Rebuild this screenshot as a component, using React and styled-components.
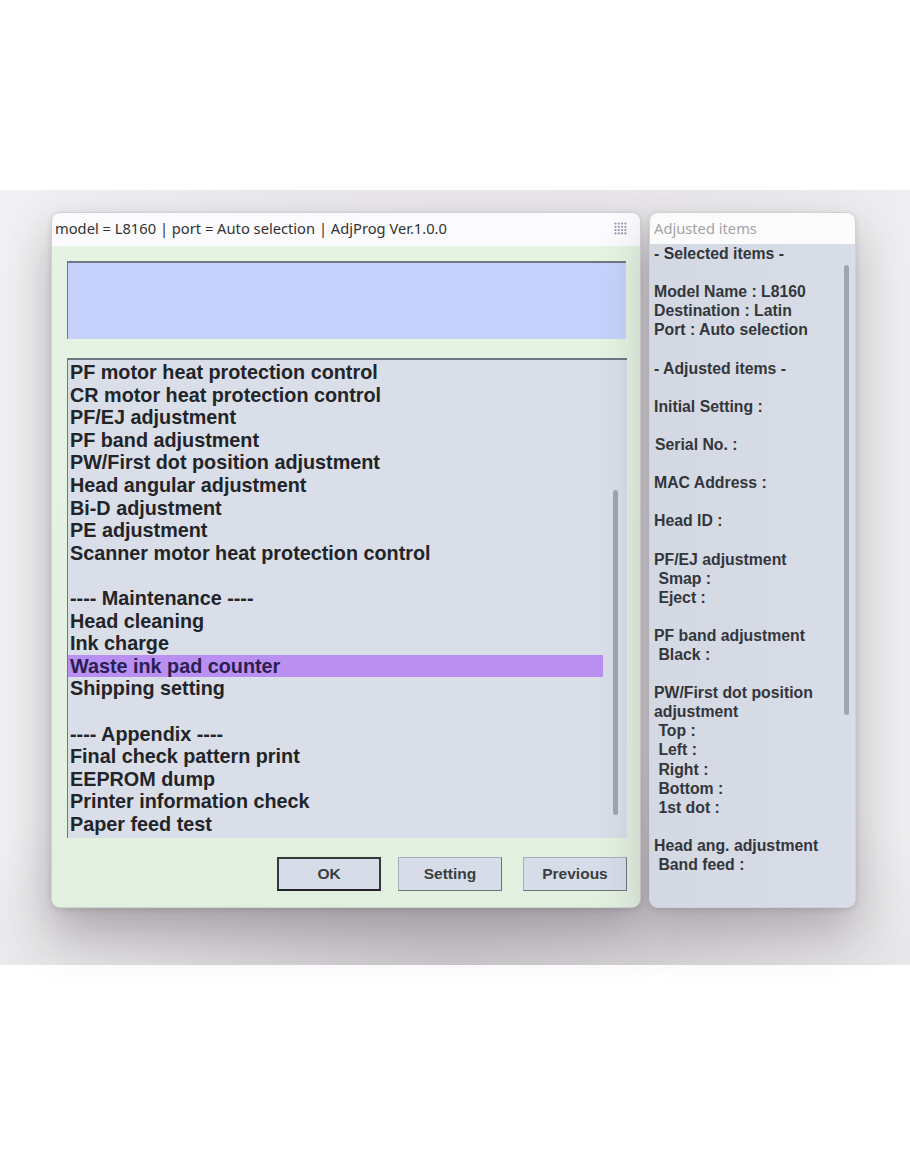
import React from 'react';
import styled, { createGlobalStyle } from 'styled-components';

const GlobalStyle = createGlobalStyle`
  html, body {
    margin: 0;
    padding: 0;
    background: #ffffff;
  }
  body {
    font-family: "Liberation Sans", Arial, sans-serif;
  }
`;

const menuItems = [
  'PF motor heat protection control',
  'CR motor heat protection control',
  'PF/EJ adjustment',
  'PF band adjustment',
  'PW/First dot position adjustment',
  'Head angular adjustment',
  'Bi-D adjustment',
  'PE adjustment',
  'Scanner motor heat protection control',
  '',
  '---- Maintenance ----',
  'Head cleaning',
  'Ink charge',
  'Waste ink pad counter',
  'Shipping setting',
  '',
  '---- Appendix ----',
  'Final check pattern print',
  'EEPROM dump',
  'Printer information check',
  'Paper feed test',
];

const adjustedLines = [
  '- Selected items -',
  '',
  'Model Name : L8160',
  'Destination : Latin',
  'Port : Auto selection',
  '',
  '- Adjusted items -',
  '',
  'Initial Setting :',
  '',
  'Serial No. :',
  '',
  'MAC Address :',
  '',
  'Head ID :',
  '',
  'PF/EJ adjustment',
  ' Smap :',
  ' Eject :',
  '',
  'PF band adjustment',
  ' Black :',
  '',
  'PW/First dot position',
  'adjustment',
  ' Top :',
  ' Left :',
  ' Right :',
  ' Bottom :',
  ' 1st dot :',
  '',
  'Head ang. adjustment',
  ' Band feed :',
];

function DotGrid() {
  const dots = [];
  for (let r = 0; r < 4; r++) {
    for (let c = 0; c < 4; c++) {
      dots.push(<circle key={`${r}-${c}`} cx={1.5 + c * 3.3} cy={1.5 + r * 3.3} r="1.1" fill="#9e94b8" />);
    }
  }
  return (
    <svg width="13" height="13" viewBox="0 0 13 13">
      {dots}
    </svg>
  );
}

export default function App() {
  return (
    <>
      <GlobalStyle />
      <Page>
        <Desktop>
          <MainWindow>
            <TitleBar>
              <TitleText>model = L8160 | port = Auto selection | AdjProg Ver.1.0.0</TitleText>
              <DotGrid />
            </TitleBar>
            <WindowBody>
              <InfoBox />
              <ListBox>
                <ListItems>
                  {menuItems.map((item, i) => (
                    <ListRow key={i} $selected={item === 'Waste ink pad counter'}>
                      {item || '\u00a0'}
                    </ListRow>
                  ))}
                </ListItems>
                <ScrollTrack $width={24} $pad={9}>
                  <ScrollThumb style={{ marginTop: 130, height: 325 }} />
                </ScrollTrack>
              </ListBox>
              <ButtonRow>
                <DialogButton $default>OK</DialogButton>
                <DialogButton $gap={17}>Setting</DialogButton>
                <DialogButton $gap={21}>Previous</DialogButton>
              </ButtonRow>
            </WindowBody>
          </MainWindow>

          <SidePanel>
            <SideTitle>Adjusted items</SideTitle>
            <SideBody>
              <SideText>
                {adjustedLines.map((line, i) => (
                  <SideLine key={i} $nudge={line.startsWith('Serial')}>{line || '\u00a0'}</SideLine>
                ))}
              </SideText>
              <ScrollTrack $width={14} $pad={6}>
                <ScrollThumb style={{ marginTop: 21, height: 450 }} />
              </ScrollTrack>
            </SideBody>
          </SidePanel>
        </Desktop>
      </Page>
    </>
  );
}

const Page = styled.div`
  width: 910px;
  height: 1155px;
  padding-top: 190px;
  box-sizing: border-box;
  background: #ffffff;
`;

const Desktop = styled.div`
  height: 775px;
  box-sizing: border-box;
  padding: 22px 0 0 51px;
  display: flex;
  align-items: flex-start;
  gap: 8px;
  background:
    radial-gradient(ellipse 60% 30% at 50% 100%, rgba(200, 196, 201, 0.9), rgba(200, 196, 201, 0) 100%),
    linear-gradient(to right, #f1f0f2 0%, #eae8eb 40%, #e9e7ea 75%, #eeedef 100%);
`;

const MainWindow = styled.div`
  width: 590px;
  height: 696px;
  display: flex;
  flex-direction: column;
  border-radius: 9px;
  overflow: hidden;
  border: 1px solid #d3d1d6;
  box-sizing: border-box;
  background: #e3f1e1;
  box-shadow: 0 24px 48px rgba(70, 62, 72, 0.38), 0 2px 6px rgba(0, 0, 0, 0.12);
`;

const TitleBar = styled.div`
  height: 33px;
  flex: none;
  display: flex;
  align-items: center;
  justify-content: space-between;
  padding: 0 13px 3px 3px;
  box-sizing: border-box;
  background: #fbfafc;
`;

const TitleText = styled.span`
  font-family: "Noto Sans", "Liberation Sans", sans-serif;
  font-size: 14.7px;
  letter-spacing: 0;
  color: #333333;
`;

const WindowBody = styled.div`
  flex: 1;
  display: flex;
  flex-direction: column;
  padding: 15px 13px 0 15px;
  background: linear-gradient(to bottom, #e4f3e2, #e2f0e0);
`;

const InfoBox = styled.div`
  width: 559px;
  height: 78px;
  box-sizing: border-box;
  background: #c6d2fb;
  border-top: 2px solid #6f7782;
  border-left: 1px solid #6f7782;
`;

const ListBox = styled.div`
  margin-top: 19px;
  width: 560px;
  height: 480px;
  box-sizing: border-box;
  display: flex;
  background: #d9dee8;
  border-top: 2px solid #6f7782;
  border-left: 1px solid #6f7782;
`;

const ListItems = styled.div`
  flex: 1;
  padding-top: 1px;
`;

const ListRow = styled.div`
  height: 22.6px;
  line-height: 22.6px;
  padding-left: 2px;
  font-size: 19.8px;
  font-weight: bold;
  color: ${p => (p.$selected ? '#2b1f52' : '#222428')};
  background: ${p => (p.$selected ? '#b990f2' : 'transparent')};
  white-space: pre;
`;

const ScrollTrack = styled.div`
  width: ${p => p.$width}px;
  flex: none;
  display: flex;
  flex-direction: column;
  align-items: flex-end;
  padding-right: ${p => p.$pad}px;
  box-sizing: border-box;
`;

const ScrollThumb = styled.div`
  width: 5px;
  border-radius: 3px;
  background: #9fa6b3;
`;

const ButtonRow = styled.div`
  display: flex;
  justify-content: flex-end;
  margin-top: 19px;
`;

const DialogButton = styled.button`
  width: 104px;
  height: 34px;
  margin-left: ${p => p.$gap || 0}px;
  box-sizing: border-box;
  font-family: "Liberation Sans", Arial, sans-serif;
  font-size: 15.5px;
  font-weight: bold;
  color: #3b3d41;
  background: #d6dde9;
  border: ${p => (p.$default ? '2px solid #34373c' : '1px solid #a9aeb6')};
  border-bottom-color: ${p => (p.$default ? '#1f2226' : '#6f747c')};
  border-right-color: ${p => (p.$default ? '#34373c' : '#6f747c')};
  padding: 0;
`;

const SidePanel = styled.div`
  width: 207px;
  height: 696px;
  display: flex;
  flex-direction: column;
  border-radius: 9px;
  overflow: hidden;
  border: 1px solid #d3d1d6;
  box-sizing: border-box;
  background: #d6dbe6;
  box-shadow: 0 24px 48px rgba(70, 62, 72, 0.32), 0 2px 6px rgba(0, 0, 0, 0.12);
`;

const SideTitle = styled.div`
  height: 31px;
  flex: none;
  display: flex;
  align-items: center;
  padding: 0 0 2px 4px;
  box-sizing: border-box;
  background: #fbfbfc;
  font-family: "Noto Sans", "Liberation Sans", sans-serif;
  font-size: 14.7px;
  color: #a3a3a6;
`;

const SideBody = styled.div`
  flex: 1;
  display: flex;
  background: linear-gradient(to right, #d3d8e3, #d9dde8);
`;

const SideText = styled.div`
  flex: 1;
  padding-left: 4px;
`;

const SideLine = styled.div`
  height: 19.1px;
  line-height: 19.1px;
  padding-left: ${p => (p.$nudge ? 1 : 0)}px;
  font-size: 15.8px;
  font-weight: bold;
  color: #33363b;
  white-space: pre;
`;
